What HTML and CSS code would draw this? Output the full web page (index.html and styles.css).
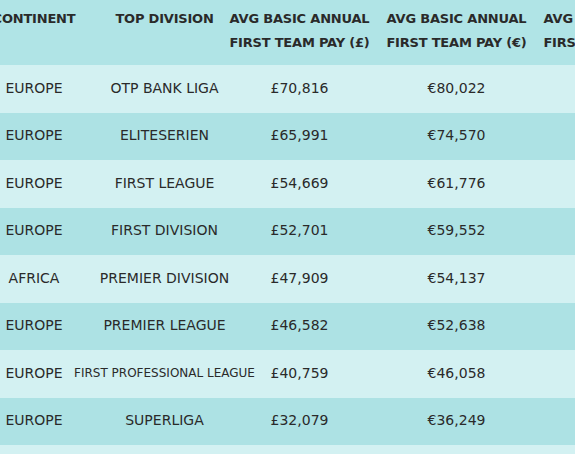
FILE: index.html
```html
<!DOCTYPE html>
<html lang="en">
<head>
    <meta charset="UTF-8">
    <meta name="viewport" content="width=device-width, initial-scale=1.0">
    <title>Average Basic Annual First Team Pay</title>
    <link rel="stylesheet" href="styles.css">
</head>
<body>
    <div class="pay-table">
        <div class="row head">
            <div class="cell"><span>CONTINENT</span></div>
            <div class="cell"><span>TOP DIVISION</span></div>
            <div class="cell"><span>AVG BASIC ANNUAL<br>FIRST TEAM PAY (£)</span></div>
            <div class="cell"><span>AVG BASIC ANNUAL<br>FIRST TEAM PAY (€)</span></div>
            <div class="cell"><span>AVG BASIC ANNUAL<br>FIRST TEAM PAY ($)</span></div>
        </div>

        <div class="row light">
            <div class="cell"><span>EUROPE</span></div>
            <div class="cell"><span>OTP BANK LIGA</span></div>
            <div class="cell"><span>£70,816</span></div>
            <div class="cell"><span>€80,022</span></div>
            <div class="cell"><span></span></div>
        </div>
        <div class="row dark">
            <div class="cell"><span>EUROPE</span></div>
            <div class="cell"><span>ELITESERIEN</span></div>
            <div class="cell"><span>£65,991</span></div>
            <div class="cell"><span>€74,570</span></div>
            <div class="cell"><span></span></div>
        </div>
        <div class="row light">
            <div class="cell"><span>EUROPE</span></div>
            <div class="cell"><span>FIRST LEAGUE</span></div>
            <div class="cell"><span>£54,669</span></div>
            <div class="cell"><span>€61,776</span></div>
            <div class="cell"><span></span></div>
        </div>
        <div class="row dark">
            <div class="cell"><span>EUROPE</span></div>
            <div class="cell"><span>FIRST DIVISION</span></div>
            <div class="cell"><span>£52,701</span></div>
            <div class="cell"><span>€59,552</span></div>
            <div class="cell"><span></span></div>
        </div>
        <div class="row light">
            <div class="cell"><span>AFRICA</span></div>
            <div class="cell"><span>PREMIER DIVISION</span></div>
            <div class="cell"><span>£47,909</span></div>
            <div class="cell"><span>€54,137</span></div>
            <div class="cell"><span></span></div>
        </div>
        <div class="row dark">
            <div class="cell"><span>EUROPE</span></div>
            <div class="cell"><span>PREMIER LEAGUE</span></div>
            <div class="cell"><span>£46,582</span></div>
            <div class="cell"><span>€52,638</span></div>
            <div class="cell"><span></span></div>
        </div>
        <div class="row light">
            <div class="cell"><span>EUROPE</span></div>
            <div class="cell small"><span>FIRST PROFESSIONAL LEAGUE</span></div>
            <div class="cell"><span>£40,759</span></div>
            <div class="cell"><span>€46,058</span></div>
            <div class="cell"><span></span></div>
        </div>
        <div class="row dark">
            <div class="cell"><span>EUROPE</span></div>
            <div class="cell"><span>SUPERLIGA</span></div>
            <div class="cell"><span>£32,079</span></div>
            <div class="cell"><span>€36,249</span></div>
            <div class="cell"><span></span></div>
        </div>
    </div>
</body>
</html>
```

FILE: styles.css
```css
:root {
    --head-color: #b0e4e6;
    --light-row: #d3f1f2;
    --dark-row: #ade2e4;
    --text-color: #2a2a2a;
}

* {
    margin: 0;
    padding: 0;
    box-sizing: border-box;
}

body {
    background: var(--light-row);
    color: var(--text-color);
    font-family: 'DejaVu Sans', sans-serif;
    overflow: hidden;
}

.pay-table {
    margin-left: -40px;
    width: 732px;
}

.row {
    display: grid;
    grid-template-columns: 148px 113px 157px 157px 157px;
    height: 47.5px;
}

.cell {
    display: flex;
    justify-content: center;
    align-items: center;
    white-space: nowrap;
    font-size: 14px;
    text-align: center;
    padding-bottom: 2px;
}

.head {
    height: 65px;
    background: var(--head-color);
}

.head .cell {
    align-items: flex-start;
    padding-top: 7px;
    padding-bottom: 0;
    font-weight: bold;
    font-size: 13px;
    line-height: 23.5px;
    letter-spacing: -0.2px;
}

.light {
    background: var(--light-row);
}

.dark {
    background: var(--dark-row);
}

.cell.small {
    font-size: 12px;
}
```
